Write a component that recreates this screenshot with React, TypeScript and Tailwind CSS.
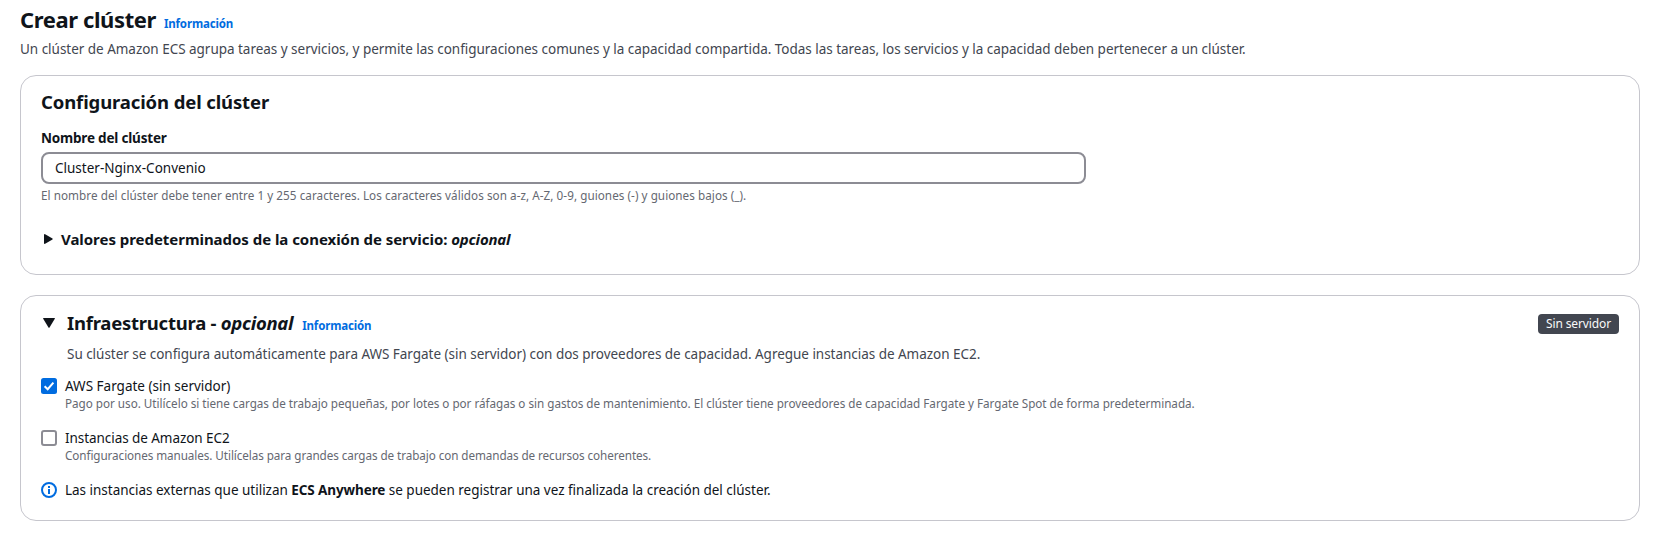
import type { ReactNode } from 'react';

function InfoLink() {
  return (
    <a href="#" className="text-[11.5px] leading-4 font-bold tracking-[-0.16px] text-[#006ce0]">
      Información
    </a>
  );
}

function Card({ className, children }: { className: string; children: ReactNode }) {
  return <section className={`rounded-2xl border border-[#c6c6cd] bg-white px-5 ${className}`}>{children}</section>;
}

function CheckedBox() {
  return (
    <svg viewBox="0 0 16 16" className="mt-0.5 size-4 shrink-0">
      <rect width="16" height="16" rx="2.5" fill="#006ce0" />
      <path d="M3.6 8.2 6.7 11.2 12.4 4.6" fill="none" stroke="#fff" strokeWidth="2" />
    </svg>
  );
}

function EmptyBox() {
  return <span className="mt-0.5 size-4 shrink-0 rounded-[3px] border-2 border-[#8c8c94] bg-white" />;
}

function InfoIcon() {
  return (
    <svg viewBox="0 0 16 16" className="mt-0.5 size-4 shrink-0" fill="none" stroke="#006ce0" strokeWidth="2">
      <circle cx="8" cy="8" r="7" />
      <path d="M8 4v2M8 7v5" />
      <path d="M7 7.5h1M7 11.5h2" strokeWidth="1" />
    </svg>
  );
}

export default function App() {
  return (
    <main className="h-[533px] overflow-hidden bg-white pt-1 pr-[14px] pl-5 font-['Noto_Sans','Open_Sans',sans-serif] text-[13.5px] leading-5 text-[#0f141a]">
      <header>
        <div className="flex items-baseline gap-2">
          <h1 className="text-[22px] leading-[30px] font-bold tracking-[-0.4px]">Crear clúster</h1>
          <InfoLink />
        </div>
        <p className="mt-[5px] tracking-[-0.025px] whitespace-nowrap text-[#424650]">
          Un clúster de Amazon ECS agrupa tareas y servicios, y permite las configuraciones comunes y la capacidad
          compartida. Todas las tareas, los servicios y la capacidad deben pertenecer a un clúster.
        </p>
      </header>

      <Card className="mt-4 h-[200px] pt-3.5">
        <h2 className="text-[18.5px] leading-6 font-bold tracking-[-0.12px]">Configuración del clúster</h2>
        <label className="mt-3.5 block font-bold tracking-[-0.19px]">Nombre del clúster</label>
        <div className="mt-1 flex h-8 w-[1045px] items-center rounded-lg border-2 border-[#8c8c94] px-3">
          Cluster-Nginx-Convenio
        </div>
        <p className="mt-[3px] text-[11.7px] leading-4 tracking-[0.05px] text-[#656871]">
          El nombre del clúster debe tener entre 1 y 255 caracteres. Los caracteres válidos son a-z, A-Z, 0-9, guiones
          (-) y guiones bajos (_).
        </p>
        <div className="mt-6 flex items-center gap-2 pl-[3px]">
          <svg viewBox="0 0 9 10" className="h-2.5 w-[9px]" fill="#0f141a">
            <path d="M.7 0 8.5 4.6q.4.4 0 .8L.7 10Q0 10 0 9.3V.7Q0 0 .7 0Z" />
          </svg>
          <h3 className="text-[15px] leading-6 font-bold tracking-[-0.04px]">
            Valores predeterminados de la conexión de servicio: <em className="tracking-[-0.2px]">opcional</em>
          </h3>
        </div>
      </Card>

      <Card className="mt-5 h-[226px] pt-[15px]">
        <div className="flex items-start justify-between">
          <div className="flex items-center">
            <svg viewBox="0 0 12 10" className="mr-3 ml-0.5 h-2.5 w-3" fill="#0f141a">
              <path d="M.6 0H11.4Q12.2 0 11.8.8L6.5 9.6Q6 10.2 5.5 9.6L.2.8Q-.2 0 .6 0Z" />
            </svg>
            <div className="flex items-baseline gap-[9px]">
              <h2 className="text-[18.5px] leading-6 font-bold tracking-[-0.24px]">
                Infraestructura - <em className="tracking-[-0.3px]">opcional</em>
              </h2>
              <InfoLink />
            </div>
          </div>
          <span className="mt-[3px] flex h-5 items-center rounded bg-[#424650] px-2 text-xs tracking-[-0.12px] text-[#f9f9fa]">
            Sin servidor
          </span>
        </div>
        <p className="mt-[9px] ml-[26px] tracking-[-0.03px] text-[#424650]">
          Su clúster se configura automáticamente para AWS Fargate (sin servidor) con dos proveedores de capacidad.
          Agregue instancias de Amazon EC2.
        </p>
        <div className="mt-3 flex flex-col gap-[17px]">
          <div className="flex gap-2">
            <CheckedBox />
            <div>
              <p className="leading-5">AWS Fargate (sin servidor)</p>
              <p className="-mt-px text-[11.7px] leading-4 tracking-[-0.022px] text-[#656871]">
                Pago por uso. Utilícelo si tiene cargas de trabajo pequeñas, por lotes o por ráfagas o sin gastos de
                mantenimiento. El clúster tiene proveedores de capacidad Fargate y Fargate Spot de forma predeterminada.
              </p>
            </div>
          </div>
          <div className="flex gap-2">
            <EmptyBox />
            <div>
              <p className="tracking-[-0.06px]">Instancias de Amazon EC2</p>
              <p className="-mt-px text-[11.7px] leading-4 tracking-[-0.075px] text-[#656871]">
                Configuraciones manuales. Utilícelas para grandes cargas de trabajo con demandas de recursos coherentes.
              </p>
            </div>
          </div>
          <div className="flex gap-2">
            <InfoIcon />
            <p className="tracking-[-0.015px]">
              Las instancias externas que utilizan <b className="tracking-[-0.1px]">ECS Anywhere</b> se pueden registrar
              una vez finalizada la creación del clúster.
            </p>
          </div>
        </div>
      </Card>
    </main>
  );
}
